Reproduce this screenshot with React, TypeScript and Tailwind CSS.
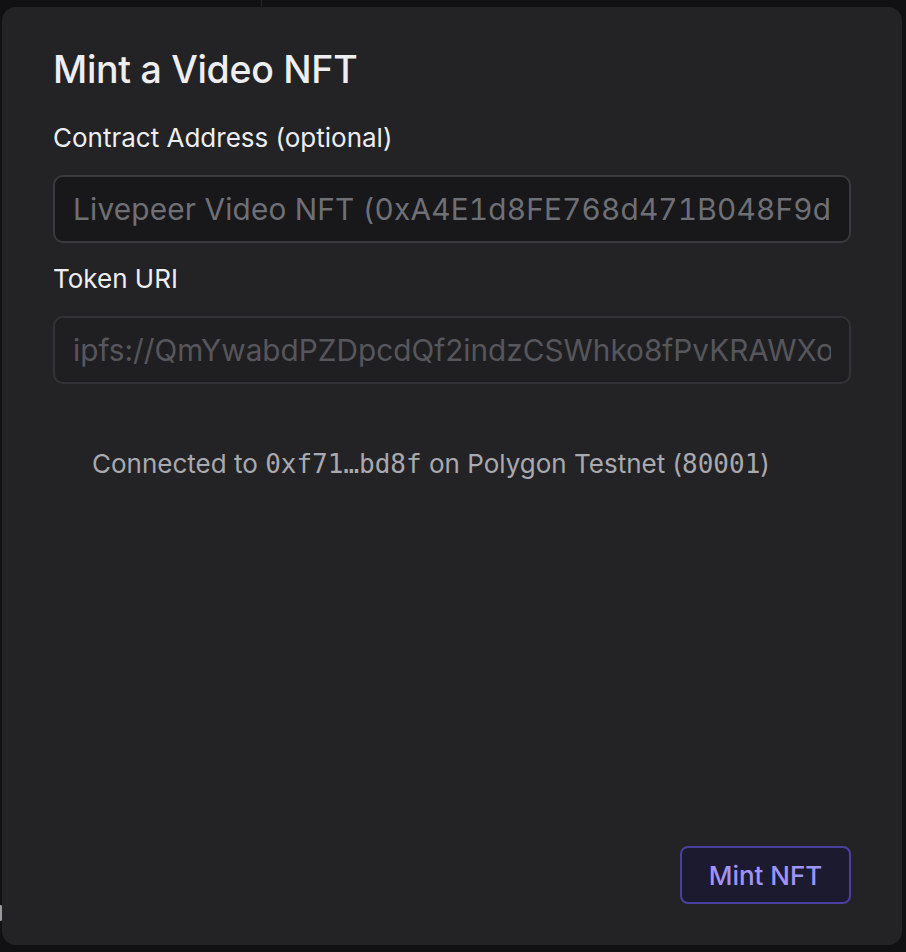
import React from "react";

const mono = { fontFamily: "'DejaVu Sans Mono', 'Liberation Mono', monospace" };

export default function App() {
  return (
    <div className="w-[906px] h-[952px] bg-[#111113] relative overflow-hidden" style={{ fontFamily: "Inter, 'Noto Sans', sans-serif" }}>
      <div className="absolute left-[261px] top-0 w-px h-[8px] bg-[#26262a]" />
      <div className="absolute left-0 top-[905px] w-[3px] h-[16px] bg-[#9a9a9e] rounded-r" />
      <div className="absolute left-[2px] top-[7px] w-[900px] h-[938px] rounded-[14px] bg-[#232325] flex flex-col px-[51px] pt-[41px] pb-[41px]">
        <h1 className="text-[37.5px] leading-[44px] font-medium text-[#eeeef0] tracking-[-0.3px]">Mint a Video NFT</h1>
        <label className="mt-[30px] text-[26px] leading-[32px] text-[#eeeef0]">Contract Address (optional)</label>
        <div className="mt-[21px] h-[68px] rounded-[10px] border-2 border-[#3a3a3e] bg-[#18181a] flex items-center px-[18px]">
          <div className="flex-1 overflow-hidden">
            <span className="text-[29.75px] text-[#6f6f76] whitespace-nowrap tabular-nums tracking-[0.2px]">Livepeer Video NFT (0xA4E1d8FE768d471B048F9d73ff90ED8fcCC03643)</span>
          </div>
        </div>
        <label className="mt-[20px] text-[26px] leading-[32px] text-[#eeeef0]">Token URI</label>
        <div className="mt-[21px] h-[68px] rounded-[10px] border-2 border-[#333337] bg-[#1f1f21] flex items-center px-[18px]">
          <div className="flex-1 overflow-hidden">
            <span className="text-[29.75px] text-[#56565c] whitespace-nowrap">ipfs://QmYwabdPZDpcdQf2indzCSWhko8fPvKRAWXoEeW9JZ1G8a</span>
          </div>
        </div>
        <p className="mt-[64px] pl-[39px] text-[26px] leading-[32px] text-[#a9a9b0]">
          Connected to <span style={mono}>0xf71…bd8f</span> on Polygon Testnet (<span style={mono}>80001</span>)
        </p>
        <div className="mt-auto flex justify-end">
          <button className="w-[171px] h-[58px] rounded-[8px] border-2 border-[#4b3fa0] bg-[#1c1a2e] text-[26px] text-[#9f94f5] font-medium">Mint NFT</button>
        </div>
      </div>
    </div>
  );
}
